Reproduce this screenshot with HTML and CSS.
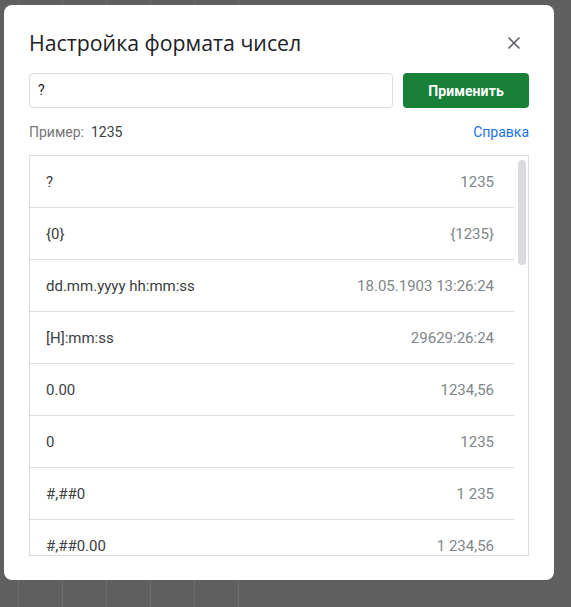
FILE: index.html
```html
<!DOCTYPE html>
<html lang="ru">
<head>
<meta charset="utf-8">
<title>Настройка формата чисел</title>
<link rel="stylesheet" href="styles.css">
</head>
<body>
<div class="backdrop">
  <div class="dialog">
    <div class="header">
      <h1 class="title">Настройка формата чисел</h1>
      <button class="close" aria-label="Закрыть">
        <svg width="24" height="24" viewBox="0 0 24 24"><path d="M6.5 6.5l11 11M17.5 6.5l-11 11" stroke="#5f6368" stroke-width="1.6" fill="none"/></svg>
      </button>
    </div>
    <div class="controls">
      <div class="input">?</div>
      <button class="apply">Применить</button>
    </div>
    <div class="meta">
      <div class="example"><span class="label">Пример:</span>&nbsp; <span class="value">1235</span></div>
      <a class="help">Справка</a>
    </div>
    <div class="list">
      <div class="rows">
        <div class="row"><span class="fmt">?</span><span class="res">1235</span></div>
        <div class="row"><span class="fmt">{0}</span><span class="res">{1235}</span></div>
        <div class="row"><span class="fmt">dd.mm.yyyy hh:mm:ss</span><span class="res">18.05.1903 13:26:24</span></div>
        <div class="row"><span class="fmt">[H]:mm:ss</span><span class="res">29629:26:24</span></div>
        <div class="row"><span class="fmt">0.00</span><span class="res">1234,56</span></div>
        <div class="row"><span class="fmt">0</span><span class="res">1235</span></div>
        <div class="row"><span class="fmt">#,##0</span><span class="res">1 235</span></div>
        <div class="row"><span class="fmt">#,##0.00</span><span class="res">1 234,56</span></div>
      </div>
      <div class="track"><div class="thumb"></div></div>
    </div>
  </div>
</div>
</body>
</html>
```
FILE: styles.css
```css
html, body {
  margin: 0;
  padding: 0;
  width: 571px;
  height: 607px;
  overflow: hidden;
  background: #5f5f5f;
  font-family: Roboto, "Liberation Sans", Arial, sans-serif;
}
.backdrop {
  width: 571px;
  height: 607px;
  box-sizing: border-box;
  padding: 5px 0 0 4px;
  background-color: #5f5f5f;
  background-image: repeating-linear-gradient(to right, transparent 0, transparent 18px, #6b6b6b 18px, #6b6b6b 19px, transparent 19px, transparent 44px);
  background-size: 240px 100%;
  background-repeat: no-repeat;
}
.dialog {
  width: 550px;
  height: 575px;
  box-sizing: border-box;
  background: #fff;
  border-radius: 8px;
  padding: 24px 25px 24px 25px;
  display: flex;
  flex-direction: column;
}
.header {
  display: flex;
  align-items: center;
  justify-content: space-between;
  height: 28px;
}
.title {
  margin: 0;
  font-family: "Open Sans", Roboto, sans-serif;
  font-weight: 400;
  font-size: 21.3px;
  line-height: 28px;
  color: #202124;
  letter-spacing: 0;
}
.close {
  width: 24px;
  height: 24px;
  padding: 0;
  margin-right: 3px;
  border: 0;
  background: none;
  display: flex;
}
.controls {
  margin-top: 16px;
  display: flex;
  gap: 10px;
  height: 35px;
}
.input {
  flex: 1;
  box-sizing: border-box;
  border: 1px solid #dadce0;
  border-radius: 4px;
  padding: 0 8px;
  font-size: 14px;
  line-height: 33px;
  color: #202124;
}
.apply {
  width: 126px;
  border: 0;
  border-radius: 4px;
  background: #188038;
  color: #fff;
  font-family: Roboto, sans-serif;
  font-weight: 700;
  font-size: 14px;
  letter-spacing: 0.1px;
}
.meta {
  margin-top: 14px;
  display: flex;
  justify-content: space-between;
  align-items: center;
  height: 20px;
  font-size: 14px;
  line-height: 20px;
}
.label { color: #757575; }
.value { color: #3c4043; }
.help { color: #1a73e8; text-decoration: none; }
.list {
  margin-top: 13px;
  height: 401px;
  border: 1px solid #dadce0;
  display: flex;
  overflow: hidden;
}
.rows {
  width: 484px;
  flex: none;
}
.row {
  height: 51px;
  border-bottom: 1px solid #e0e0e0;
  display: flex;
  justify-content: space-between;
  align-items: center;
  padding: 0 20px 0 16px;
  font-size: 15px;
  flex: none;
}
.fmt { color: #3c4043; }
.res { color: #80868b; }
.track {
  flex: 1;
  padding: 4px 0 0 4px;
}
.thumb {
  width: 8px;
  height: 105px;
  background: #dadce0;
  border-radius: 4px;
}
```
